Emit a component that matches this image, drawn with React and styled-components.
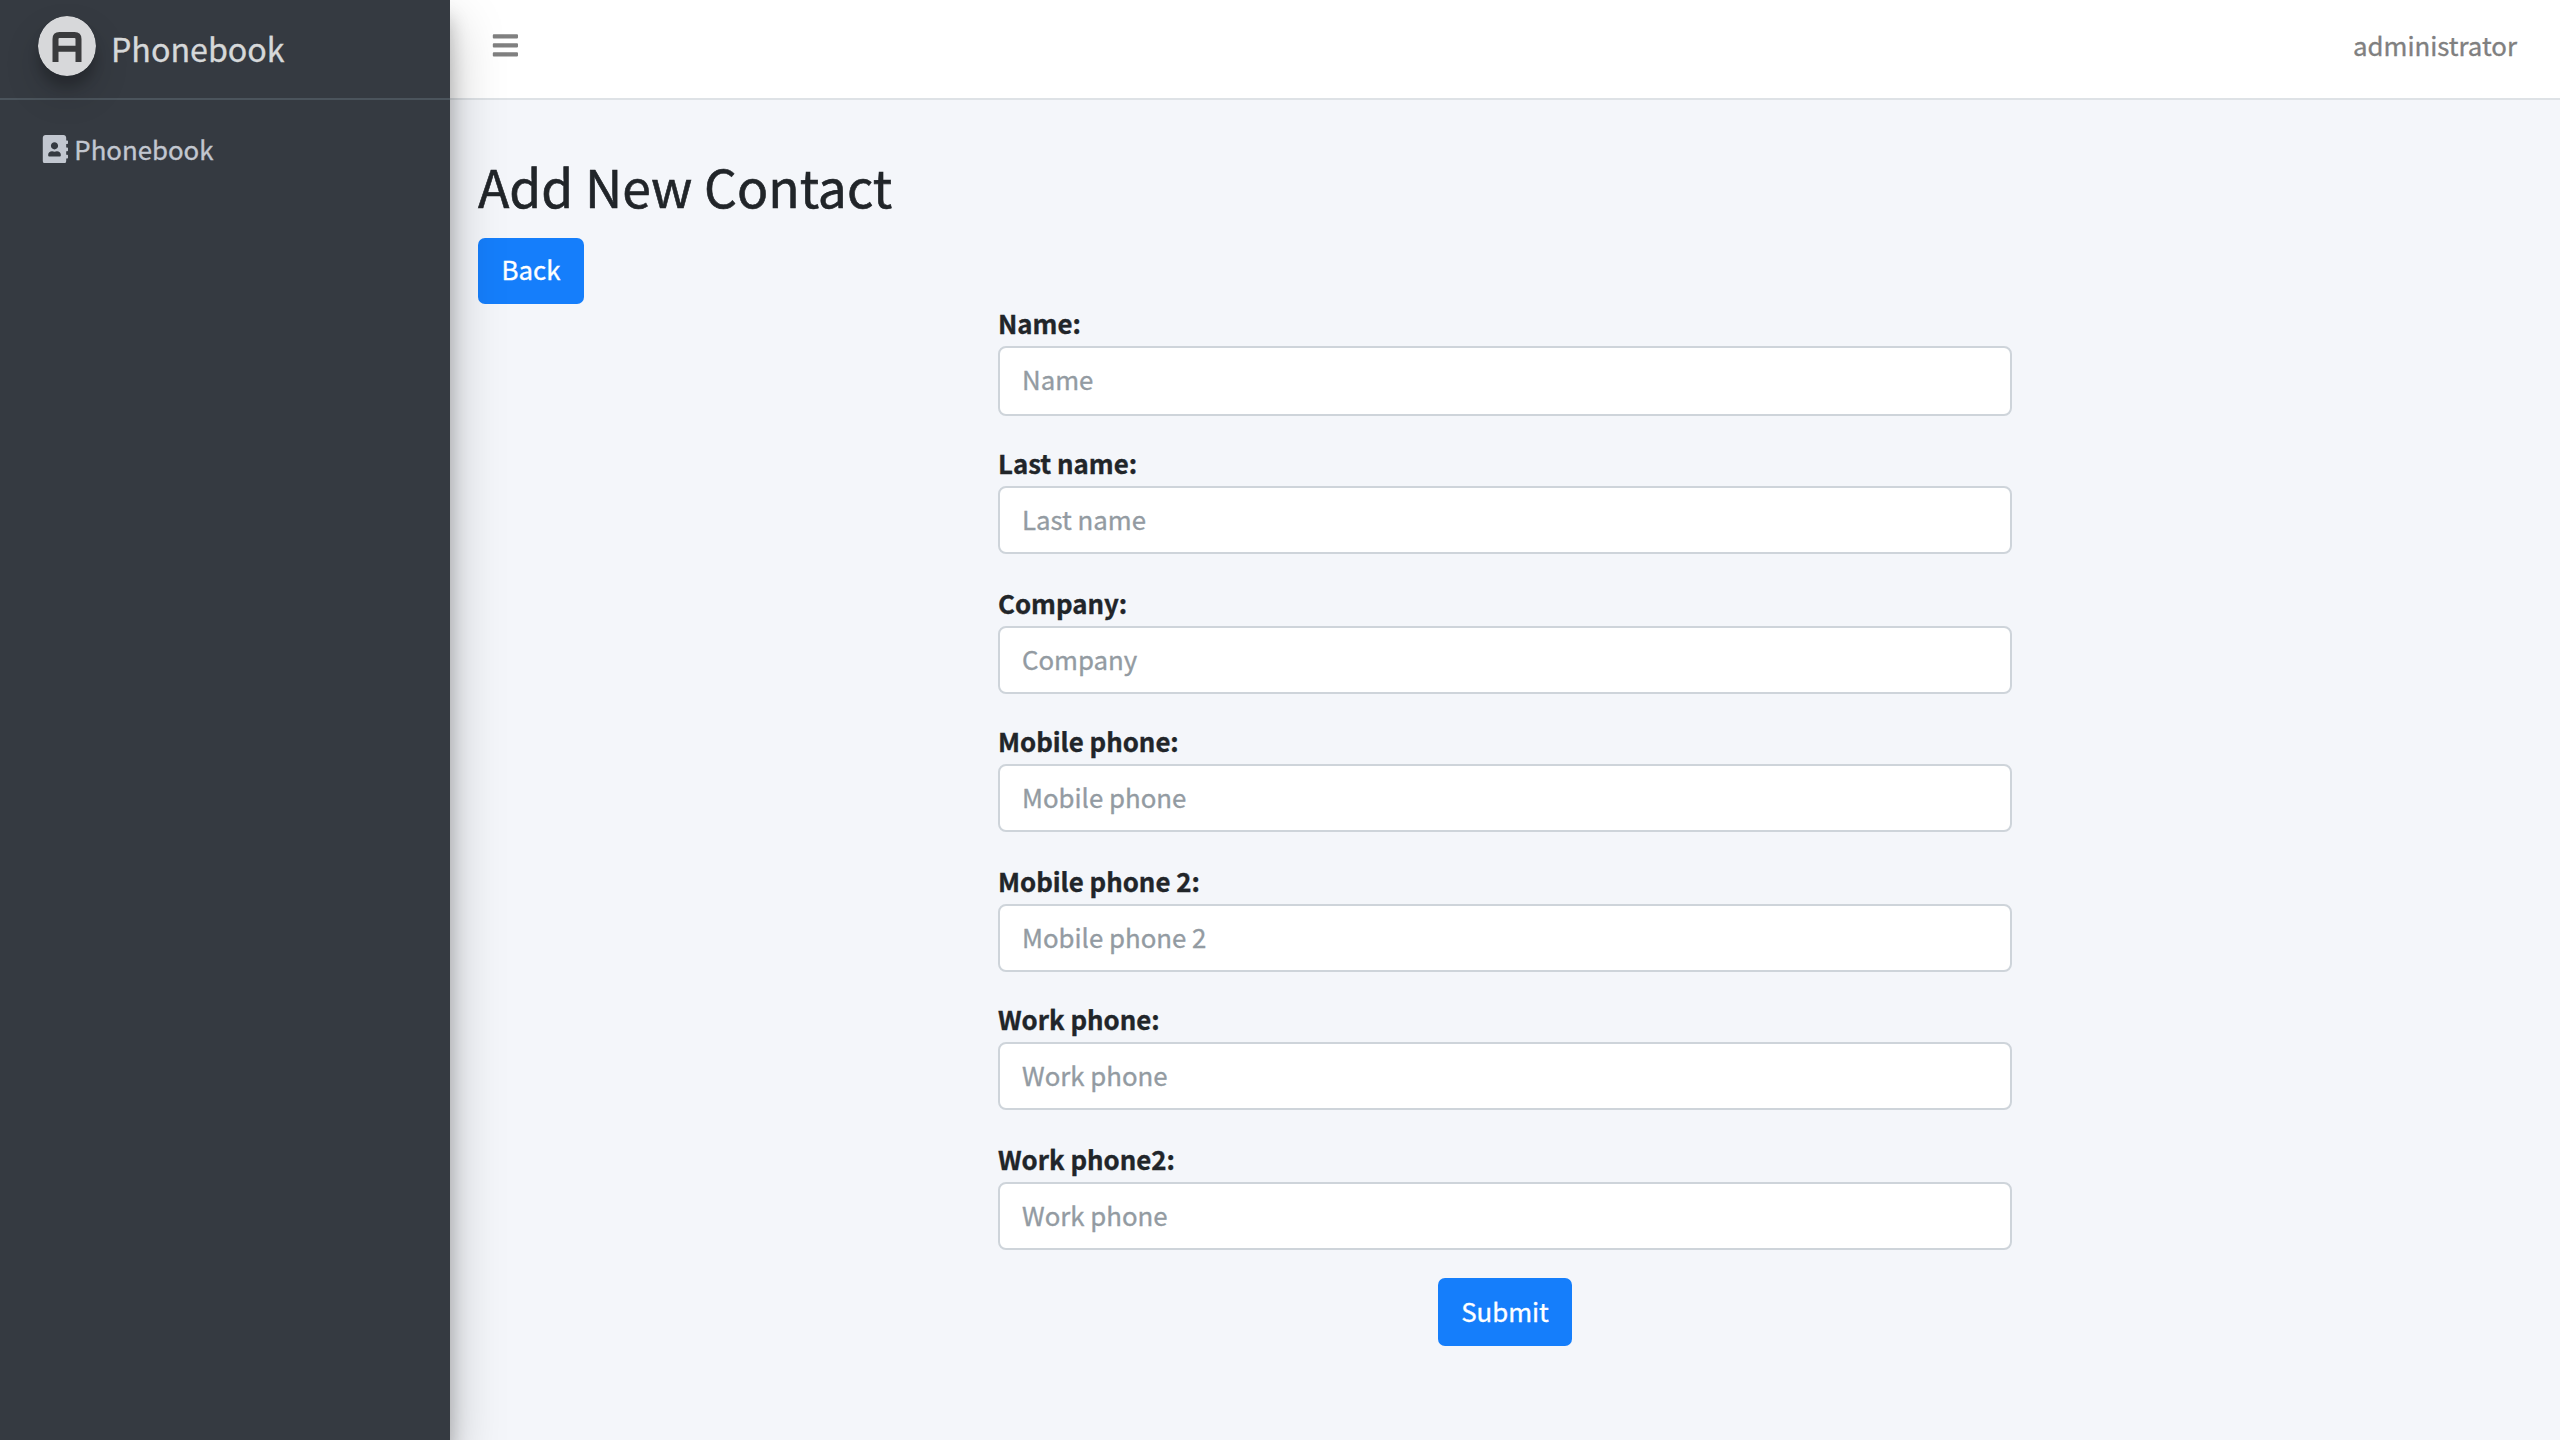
import React from "react";
import styled, { createGlobalStyle } from "styled-components";
import { FaAddressBook, FaBars } from "react-icons/fa";

const GlobalStyle = createGlobalStyle`
  *, *::before, *::after { box-sizing: border-box; }
  body {
    margin: 0;
    background: #f4f6fa;
    color: #212529;
    font-family: "Noto Sans CJK SC", "Noto Sans", sans-serif;
    font-size: 25.8px;
    line-height: 44px;
    -webkit-text-stroke: 0.35px currentColor;
    overflow: hidden;
  }
`;

const Page = styled.div`
  display: flex;
  width: 100vw;
  height: 100vh;
`;

const Sidebar = styled.aside`
  position: relative;
  z-index: 2;
  flex: 0 0 450px;
  background: #353a41;
  box-shadow: 0 25px 50px rgba(0, 0, 0, 0.25), 0 18px 18px rgba(0, 0, 0, 0.22);
`;

const Brand = styled.a`
  display: flex;
  align-items: flex-start;
  height: 100px;
  padding: 16px 0 0 38px;
  border-bottom: 2px solid #4b545c;
`;

const Logo = styled.svg`
  width: 58px;
  height: 60px;
  border-radius: 50%;
  box-shadow: 0 18px 36px rgba(0, 0, 0, 0.15), 0 11px 11px rgba(0, 0, 0, 0.19);
`;

const BrandText = styled.span`
  margin: 10px 0 0 15px;
  color: #d6d8d9;
  font-size: 32.2px;
`;

const NavItem = styled.a`
  display: flex;
  align-items: center;
  gap: 4.5px;
  margin-top: 27px;
  padding-left: 41px;
  color: #c2c7d0;
  line-height: 44px;

  svg { font-size: 28.8px; stroke-width: 0; }
`;

const Main = styled.div`
  flex: 1;
  min-width: 0;
`;

const Header = styled.header`
  display: flex;
  justify-content: space-between;
  height: 100px;
  padding: 23px 43px 0 41px;
  background: #fff;
  border-bottom: 2px solid #dee2e6;
  color: #808080;

  svg { margin-top: 8px; font-size: 28.8px; }
`;

const Content = styled.main`
  padding: 47px 28px 0;
`;

const Title = styled.h1`
  margin: 0;
  font-size: 51.6px;
  font-weight: 400;
  line-height: 78px;
  -webkit-text-stroke-width: 0.6px;
`;

const Button = styled.button`
  display: block;
  height: ${(p) => p.$height}px;
  width: ${(p) => p.$width}px;
  padding: 0 0 ${(p) => p.$lift}px;
  border: 0;
  border-radius: 7px;
  background: #157efb;
  color: #fff;
  font: inherit;
`;

const TitleBar = styled.div`
  display: flex;
  flex-direction: column;
  gap: 13px;
`;

const Form = styled.form`
  display: flex;
  flex-direction: column;
  width: 1014px;
  margin: 2px 0 0 520px;
`;

const Input = styled.input`
  display: block;
  width: 100%;
  height: 68px;
  padding: 0 22px 4px;
  border: 2px solid #ced4da;
  border-radius: 8px;
  background: #fff;
  font: inherit;

  &::placeholder { color: #939ba2; opacity: 1; }
`;

const Field = styled.div`
  margin-bottom: 30px;

  &:nth-child(even) { margin-bottom: 32px; }
  &:first-child ${Input} { height: 70px; padding-bottom: 6px; }
  &:nth-last-child(2) { margin-bottom: 28px; }
`;

const Label = styled.label`
  display: block;
  margin-bottom: 6px;
  font-weight: 700;
  line-height: 34px;
`;

const Actions = styled.div`
  display: flex;
  justify-content: center;
`;

const fields = [
  ["Name:", "Name"],
  ["Last name:", "Last name"],
  ["Company:", "Company"],
  ["Mobile phone:", "Mobile phone"],
  ["Mobile phone 2:", "Mobile phone 2"],
  ["Work phone:", "Work phone"],
  ["Work phone2:", "Work phone"],
];

export default function App() {
  return (
    <Page>
      <GlobalStyle />
      <Sidebar>
        <Brand>
          <Logo viewBox="0 0 58 60">
            <ellipse cx="29" cy="30" rx="29" ry="30" fill="#d7d8da" />
            <path
              d="M17.5 46V23Q17.5 19 21.5 19H36.5Q40.5 19 40.5 23V46M17.5 32.7H40.5"
              fill="none"
              stroke="#3a3b3d"
              strokeWidth="6"
            />
          </Logo>
          <BrandText>Phonebook</BrandText>
        </Brand>
        <NavItem>
          <FaAddressBook />
          <span>Phonebook</span>
        </NavItem>
      </Sidebar>
      <Main>
        <Header>
          <FaBars />
          <span>administrator</span>
        </Header>
        <Content>
          <TitleBar>
            <Title>Add New Contact</Title>
            <Button $width={106} $height={66} $lift={4}>Back</Button>
          </TitleBar>
          <Form>
            {fields.map(([label, placeholder], i) => (
              <Field key={label}>
                <Label htmlFor={`field-${i}`}>{label}</Label>
                <Input id={`field-${i}`} placeholder={placeholder} />
              </Field>
            ))}
            <Actions>
              <Button type="button" $width={134} $height={68} $lift={2}>Submit</Button>
            </Actions>
          </Form>
        </Content>
      </Main>
    </Page>
  );
}
